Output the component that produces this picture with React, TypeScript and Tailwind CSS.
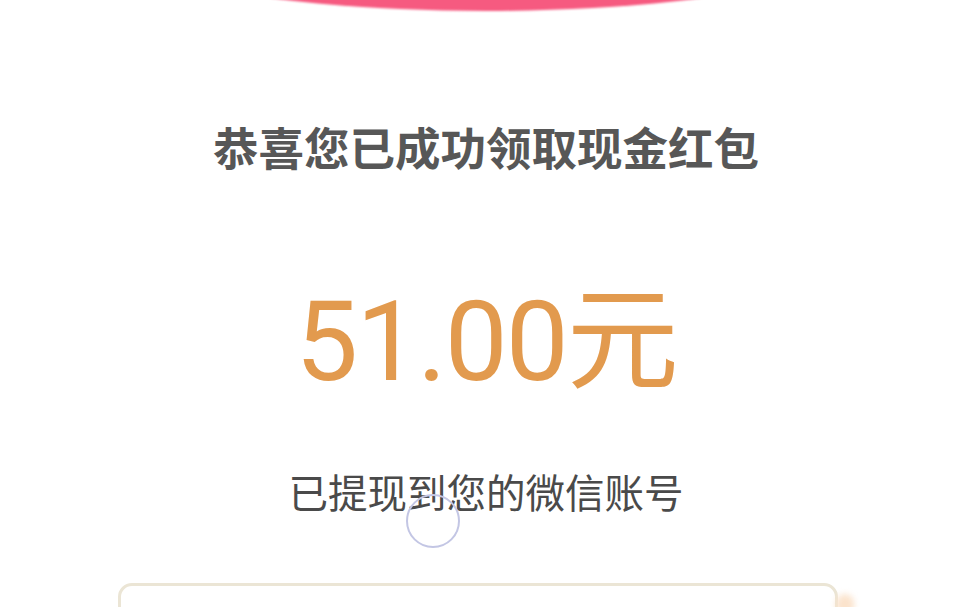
import React from "react";

export default function App() {
  return (
    <div className="relative w-[972px] h-[607px] overflow-hidden bg-white flex flex-col items-center" style={{ fontFamily: '"Noto Sans CJK SC", "Noto Sans", sans-serif' }}>
      <div className="shrink-0 w-[880px] h-[200px] mt-[-189px] rounded-[50%] bg-[#f65a80] blur-[1px]" />
      <div className="shrink-0 mt-[104px] h-[64px] flex items-center text-[45.5px] font-bold leading-none text-[#575757]">
        恭喜您已成功领取现金红包
      </div>
      <div className="shrink-0 mt-[103px] h-[120px] flex items-center text-[#e29a4e] leading-none">
        <span className="text-[112px] tracking-[-2px]" style={{ fontFamily: 'Roboto, "Noto Sans CJK SC", sans-serif' }}>51.00元</span>
      </div>
      <div className="shrink-0 mt-[65px] h-[48px] flex items-center text-[39.5px] leading-none text-[#4a4a4a]">
        已提现到您的微信账号
      </div>
      <div className="shrink-0 mt-[68px] ml-[-17px] w-[720px] h-[60px] rounded-[14px] border-[3px] border-[#ebe5d5] bg-white" />
      <div className="absolute left-[406px] top-[494px] w-[54px] h-[54px] rounded-full border-2 border-[#c3c6e4]" />
      <div className="absolute left-[836px] top-[594px] w-[18px] h-[22px] rounded-full bg-[#fbe3cc] blur-[3px]" />
    </div>
  );
}
